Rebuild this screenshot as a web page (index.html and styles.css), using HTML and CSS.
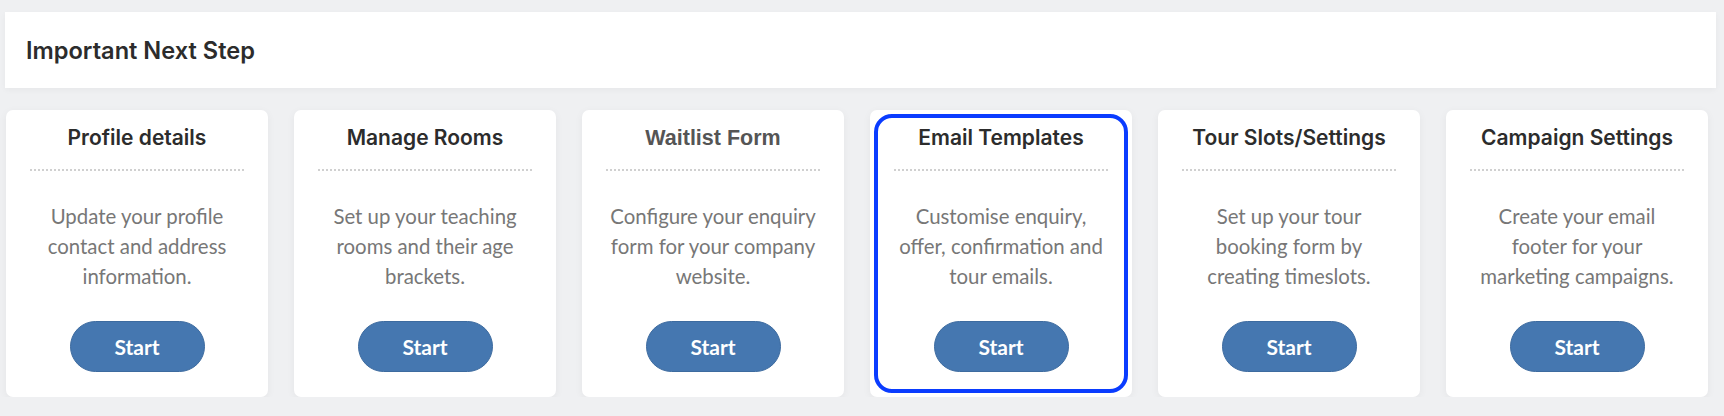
FILE: index.html
```html
<!DOCTYPE html>
<html lang="en">
<head>
<meta charset="utf-8">
<title>Important Next Step</title>
<link rel="stylesheet" href="styles.css">
</head>
<body>
  <main class="page">
    <header class="panel-head">
      <h2 class="panel-title">Important Next Step</h2>
    </header>

    <section class="steps">
      <article class="step">
        <h3 class="step-title">Profile details</h3>
        <p class="step-text">Update your profile contact and address information.</p>
        <button class="step-btn" type="button">Start</button>
      </article>

      <article class="step">
        <h3 class="step-title">Manage Rooms</h3>
        <p class="step-text">Set up your teaching rooms and their age brackets.</p>
        <button class="step-btn" type="button">Start</button>
      </article>

      <article class="step">
        <h3 class="step-title step-title--alt">Waitlist Form</h3>
        <p class="step-text">Configure your enquiry form for your company website.</p>
        <button class="step-btn" type="button">Start</button>
      </article>

      <article class="step step--active">
        <h3 class="step-title">Email Templates</h3>
        <p class="step-text">Customise enquiry, offer, confirmation and tour emails.</p>
        <button class="step-btn" type="button">Start</button>
      </article>

      <article class="step">
        <h3 class="step-title">Tour Slots/Settings</h3>
        <p class="step-text">Set up your tour booking form by creating timeslots.</p>
        <button class="step-btn" type="button">Start</button>
      </article>

      <article class="step">
        <h3 class="step-title">Campaign Settings</h3>
        <p class="step-text">Create your email footer for your marketing campaigns.</p>
        <button class="step-btn" type="button">Start</button>
      </article>
    </section>
  </main>
</body>
</html>
```

FILE: styles.css
```css
html, body {
  margin: 0;
  padding: 0;
}

body {
  background: #eff0f2;
  font-family: "Inter", "Noto Sans", sans-serif;
  color: #2c2c2c;
}

.page {
  padding: 12px 8px 0 5px;
}

/* top banner */
.panel-head {
  height: 76px;
  background: #ffffff;
  display: flex;
  align-items: center;
  padding-left: 21px;
  box-shadow: 0 2px 6px rgba(0, 0, 0, 0.04);
}

.panel-title {
  margin: 0;
  font-size: 23.6px;
  font-weight: 600;
  color: #2c2c2c;
}

/* row of step cards */
.steps {
  display: flex;
  gap: 26px;
  margin-top: 22px;
  padding-left: 1px;
}

.step {
  position: relative;
  width: 262px;
  height: 287px;
  box-sizing: border-box;
  background: #ffffff;
  border-radius: 7px;
  box-shadow: 0 2px 8px rgba(0, 0, 0, 0.05);
  display: flex;
  flex-direction: column;
  align-items: center;
  padding: 16px 24px 0;
}

/* focus ring on the selected step */
.step--active::after {
  content: "";
  position: absolute;
  inset: 4px;
  border: 4px solid #0a3cff;
  border-radius: 18px;
  pointer-events: none;
}

.step-title {
  margin: 0;
  width: 100%;
  padding-bottom: 19px;
  border-bottom: 2px dotted #d0d0d0;
  text-align: center;
  font-size: 21px;
  line-height: 24px;
  font-weight: 600;
  color: #2c2c2c;
  white-space: nowrap;
}

.step-title--alt {
  font-family: "Liberation Sans", Arial, sans-serif;
  font-size: 21.5px;
  font-weight: 700;
  color: #555555;
}

.step-text {
  margin: 30px 0 0;
  width: 209px;
  height: 90px;
  text-align: center;
  font-family: "Lato", "Liberation Sans", sans-serif;
  font-size: 20.4px;
  line-height: 30px;
  color: #777777;
}

.step-btn {
  margin-top: 30px;
  width: 135px;
  height: 51px;
  border: 1px solid #3d6b9f;
  border-radius: 26px;
  background: #4577b0;
  color: #ffffff;
  font-family: "Lato", "Liberation Sans", sans-serif;
  font-size: 21px;
  font-weight: 700;
  cursor: pointer;
}
```
